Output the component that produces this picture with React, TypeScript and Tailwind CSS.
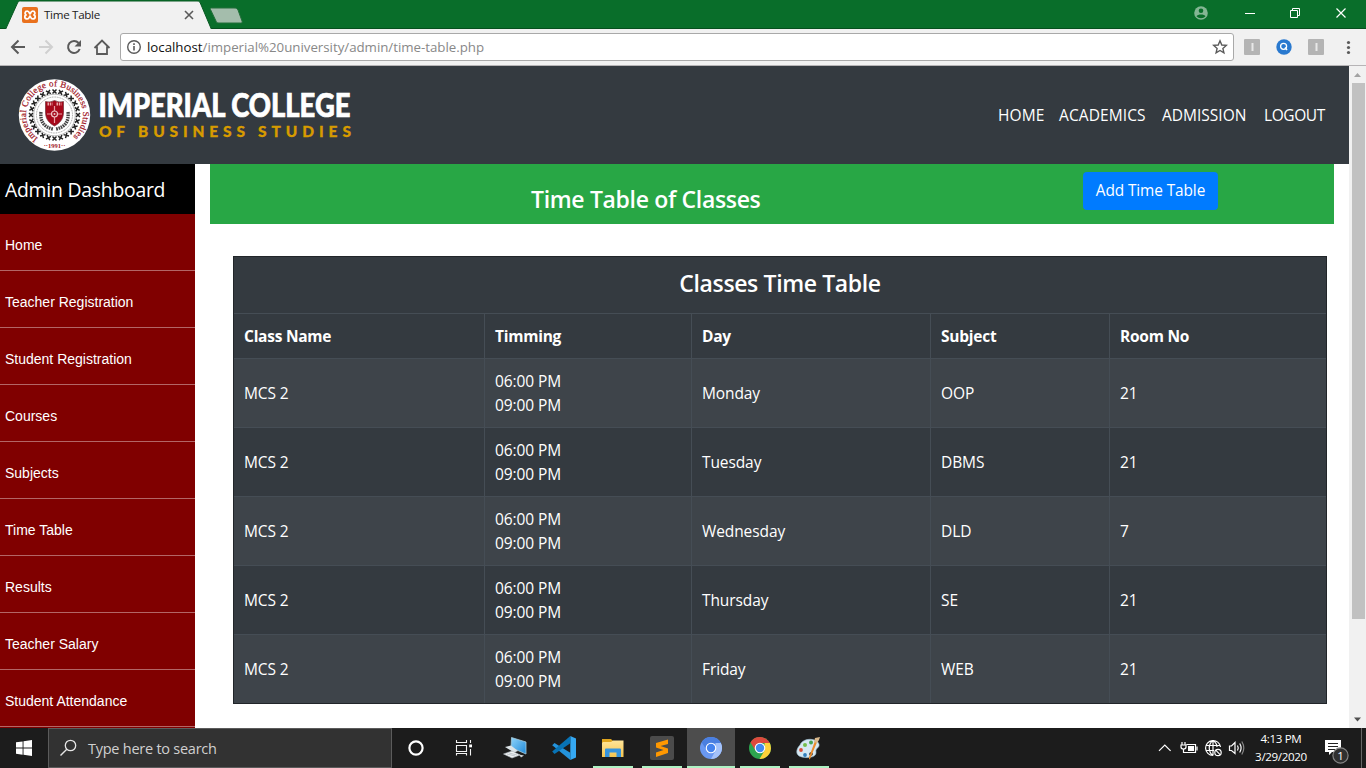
import React from "react";

const ui = "font-['Open_Sans','Noto_Sans',sans-serif]";

const rows = [
  ["Monday", "OOP", "21"],
  ["Tuesday", "DBMS", "21"],
  ["Wednesday", "DLD", "7"],
  ["Thursday", "SE", "21"],
  ["Friday", "WEB", "21"],
];

const menu = [
  "Home",
  "Teacher Registration",
  "Student Registration",
  "Courses",
  "Subjects",
  "Time Table",
  "Results",
  "Teacher Salary",
  "Student Attendance",
];

function TabStrip() {
  return (
    <div className="relative h-[29px] shrink-0 bg-[#096e2a]">
      <svg className="absolute inset-0" width="1366" height="29" viewBox="0 0 1366 29">
        <path d="M0 28.5H1366" stroke="#064f1e" />
        <path d="M5.500 29.500L17.500 3C18.200 1.500 19 1 20.500 1H197C199 1 199.500 1.500 200.300 3L211.500 29.500Z" fill="#f1f1f1" stroke="#075821" />
        <path d="M211.500 8H234C236 8 237 8.500 238 10L242 21C242.500 22.500 242 23 240.500 23H219C217 23 216.500 22.500 216 21L210.500 9.500C210 8.500 210.500 8 211.500 8Z" fill="#a4bdac" stroke="#246f3b" />
        <rect x="22" y="7" width="16" height="16" rx="2" fill="#e9711d" />
        <path d="M27.300 11.200C24.500 11.200 24.400 14.500 26.600 14.900C24 15.300 24.200 18.900 27.300 18.900C29.600 18.900 29.200 16 30 16C30.800 16 30.400 18.900 32.700 18.900C35.800 18.900 36 15.300 33.400 14.900C35.600 14.500 35.500 11.200 32.700 11.200C30.400 11.200 30.800 14 30 14C29.200 14 29.600 11.200 27.300 11.200Z" fill="none" stroke="#fff" strokeWidth="1.700" />
        <path d="M185 11L193 19M193 11L185 19" stroke="#5a5a5a" strokeWidth="1.600" />
        <circle cx="1201" cy="13" r="6.800" fill="#84b694" />
        <circle cx="1201" cy="10.800" r="2.300" fill="#096e2a" />
        <path d="M1196.500 16.200C1197.500 13.800 1204.500 13.800 1205.500 16.200C1203.500 18.800 1198.500 18.800 1196.500 16.200Z" fill="#096e2a" />
        <path d="M1245 13.500H1255M1290.500 10.500H1297.500V17.500H1290.500ZM1292.500 10V8.500H1299.500V15.500H1298" fill="none" stroke="#fff" />
        <path d="M1336.500 8.500L1345.500 17.500M1345.500 8.500L1336.500 17.500" stroke="#fff" strokeWidth="1.200" />
      </svg>
      <span className={`${ui} absolute left-[44px] top-[6px] text-[11.6px] leading-[18px] tracking-[-0.3px] text-[#222]`}>Time Table</span>
    </div>
  );
}

function Toolbar() {
  return (
    <div className="flex h-[37px] shrink-0 items-start border-b border-[#b6b4b6] bg-[#f1f1f1] pt-1">
      <svg width="120" height="29" viewBox="0 33 120 29" fill="none" className="shrink-0">
        <path d="M25 47H12.500M18.500 40.500L12 47L18.500 53.500" stroke="#5a5a5a" strokeWidth="2" />
        <path d="M39 47H51.500M45.500 40.500L52 47L45.500 53.500" stroke="#d0d0d0" strokeWidth="2" />
        <path d="M78.600 43A6 6 0 1 0 79.700 49" stroke="#5a5a5a" strokeWidth="2" />
        <path d="M81 40V46.500H74.500Z" fill="#5a5a5a" />
        <path d="M94.500 48L102 40.500L109.500 48M97 46.500V54H107V46.500" stroke="#5a5a5a" strokeWidth="1.800" />
      </svg>
      <div className="flex h-[28px] w-[1114px] shrink-0 items-center rounded-[3px] border border-[#a9a9a9] bg-white px-[5px]">
        <svg width="16" height="16" viewBox="0 0 16 16">
          <circle cx="8" cy="8" r="6.300" fill="none" stroke="#5a5a5a" strokeWidth="1.400" />
          <path d="M8 7V11.500M8 4.300V5.900" stroke="#5a5a5a" strokeWidth="1.600" />
        </svg>
        <span className={`${ui} ml-[5px] text-[13.3px] leading-[20px] tracking-[-0.02px] text-[#888]`}>
          <span className="text-[#111]">localhost</span>/imperial%20university/admin/time-table.php
        </span>
        <svg className="ml-auto" width="16" height="16" viewBox="0 0 16 16">
          <path d="M8 1.800L9.800 6L14.300 6.400L10.900 9.400L11.900 13.900L8 11.500L4.100 13.900L5.100 9.400L1.700 6.400L6.200 6Z" fill="none" stroke="#5a5a5a" strokeWidth="1.400" />
        </svg>
      </div>
      <svg width="132" height="29" viewBox="1234 33 132 29">
        <rect x="1244" y="39" width="16" height="16" rx="1" fill="#b4b4b4" />
        <path d="M1252.500 43V51" stroke="#e8e8e8" strokeWidth="2" />
        <circle cx="1284" cy="47" r="7.700" fill="#2979cf" />
        <circle cx="1283.600" cy="46.300" r="3" fill="none" stroke="#fff" strokeWidth="1.300" />
        <path d="M1285 47.500L1287 50" stroke="#fff" strokeWidth="1.500" />
        <rect x="1308" y="39" width="16" height="16" rx="1" fill="#b4b4b4" />
        <path d="M1316.500 43V51" stroke="#e8e8e8" strokeWidth="2" />
        <circle cx="1348.500" cy="42.500" r="1.600" fill="#5a5a5a" />
        <circle cx="1348.500" cy="47.500" r="1.600" fill="#5a5a5a" />
        <circle cx="1348.500" cy="52.500" r="1.600" fill="#5a5a5a" />
      </svg>
    </div>
  );
}

function Logo() {
  return (
    <svg width="370" height="98" viewBox="0 66 370 98" className="shrink-0">
      <defs>
        <path id="ringTop" d="M38 138.300A28.550 28.550 0 1 1 73 136.700" />
      </defs>
      <circle cx="54.500" cy="115" r="35.700" fill="#fff" />
      <text fill="#a01525" fontSize="8.900" fontFamily="Liberation Serif, serif" textLength="141" stroke="#a01525" strokeWidth=".2">
        <textPath href="#ringTop">Imperial College of Business Studies</textPath>
      </text>
      <text x="54.500" y="148.300" textAnchor="middle" fill="#a01525" fontSize="6.500" fontFamily="Liberation Serif, serif" fontWeight="bold">··1991··</text>
      {Array.from({ length: 24 }, (_, i) => (
        <path key={i} transform={`rotate(${i * 15} 54.5 115)`} d="M52.500 89.500L56.500 93.500M56.500 89.500L52.500 93.500" stroke="#222" strokeWidth="1.500" />
      ))}
      <circle cx="54.500" cy="115" r="20.800" fill="none" stroke="#999" strokeWidth=".7" />
      <circle cx="54.500" cy="115" r="18" fill="none" stroke="#888" strokeWidth=".8" strokeDasharray="1 .7" />
      <path d="M41 112C40 122 44 127 53 129M68 112C69 122 65 127 56 129" fill="none" stroke="#444" strokeWidth="3.400" strokeDasharray="1.600 .8" />
      <path d="M45.500 101.500Q50 103 54.500 100.500Q59 103 63.500 101.500V112C63.500 120 59 123.500 54.500 126C50 123.500 45.500 120 45.500 112Z" fill="#a6081a" stroke="#703038" strokeWidth=".7" />
      <path d="M54.500 106V123M47 114H62" stroke="#e8a0a5" strokeWidth="1.200" />
      <path d="M47.500 104H52.500M56.500 104H61.500" stroke="#e9a8ab" strokeWidth="3" strokeDasharray="1.500 .8" />
      <circle cx="54.500" cy="114" r="3" fill="#a6081a" stroke="#eec5c7" strokeWidth="1.200" />
      <circle cx="54.500" cy="114" r="1" fill="#eec5c7" />
      <g fontFamily="Lato, sans-serif" fontWeight="900">
        <text x="98.500" y="117" fontSize="32" fill="#fff" stroke="#fff" strokeWidth=".7" textLength="252" lengthAdjust="spacingAndGlyphs">IMPERIAL COLLEGE</text>
        <g fontSize="15.500" fill="#d79b00" stroke="#d79b00" strokeWidth=".3">
          <text x="99" y="137" textLength="26">OF</text>
          <text x="138" y="137" textLength="107">BUSINESS</text>
          <text x="258" y="137" textLength="93">STUDIES</text>
        </g>
      </g>
    </svg>
  );
}

function Page() {
  return (
    <div className={`${ui} flex min-w-0 flex-1 flex-col overflow-hidden bg-white`}>
      <header className="flex h-[98px] shrink-0 items-center justify-between bg-[#343a40] pr-6">
        <Logo />
        <nav className="flex gap-4 whitespace-nowrap text-[15.5px] leading-6 text-white">
          <a className="w-[45px] tracking-[0.1px]">HOME</a>
          <a className="w-[87px] tracking-[0.1px]">ACADEMICS</a>
          <a className="w-[86px]">ADMISSION</a>
          <a className="w-[61px] tracking-[-0.4px]">LOGOUT</a>
        </nav>
      </header>
      <div className="flex min-h-0 flex-1">
        <aside className="w-[195px] shrink-0 overflow-hidden bg-[#800000] text-white">
          <h2 className="h-[50px] bg-black pl-[5px] pt-[11px] text-[19.4px] leading-[30px] tracking-[-0.25px]">Admin Dashboard</h2>
          <ul className="font-['Liberation_Sans',Arial,sans-serif] text-[14px]">
            {menu.map((m) => (
              <li key={m} className="flex h-[57px] items-center border-b border-[#b36666] pl-[5px] pt-[6px]">{m}</li>
            ))}
          </ul>
        </aside>
        <main className="flex-1 px-[15px]">
          <div className="flex h-[60px] bg-[#28a745] text-white">
            <h1 className="w-[873px] pl-[321px] pt-[21px] text-[23px] font-semibold leading-[29px] tracking-[-0.33px]">Time Table of Classes</h1>
            <button className="mt-2 flex h-[38px] w-[135px] items-center justify-center whitespace-nowrap rounded bg-[#007bff] text-[15.4px] tracking-[-0.1px]">Add Time Table</button>
          </div>
          <div className="ml-[23px] mt-8 h-[448px] w-[1094px] border border-[#212529] bg-[#343a40]">
            <table className="w-full table-fixed border-separate border-spacing-0 text-left text-[15.5px] leading-6 tracking-[-0.1px] text-white">
              <colgroup>
                <col className="w-[250px]" />
                <col className="w-[207px]" />
                <col className="w-[239px]" />
                <col className="w-[179px]" />
                <col className="w-[217px]" />
              </colgroup>
              <thead>
                <tr className="h-[56px]">
                  <th colSpan={5} className="p-0 pb-[4px] text-center text-[23px] font-semibold tracking-[-0.37px]">Classes Time Table</th>
                </tr>
                <tr className="h-[45px]">
                  {["Class Name", "Timming", "Day", "Subject", "Room No"].map((h) => (
                    <th key={h} className="border-l border-t border-[#454d55] py-0 pl-[10px] font-bold tracking-[-0.25px] first:border-l-0">{h}</th>
                  ))}
                </tr>
              </thead>
              <tbody>
                {rows.map(([day, subject, room]) => (
                  <tr key={day} className="h-[69px] odd:bg-[#3e444a]">
                    <td className="border-t border-[#454d55] py-0 pl-[10px]">MCS 2</td>
                    <td className="border-l border-t border-[#454d55] py-0 pl-[10px]">06:00 PM<br />09:00 PM</td>
                    <td className="border-l border-t border-[#454d55] py-0 pl-[10px]">{day}</td>
                    <td className="border-l border-t border-[#454d55] py-0 pl-[10px]">{subject}</td>
                    <td className="border-l border-t border-[#454d55] py-0 pl-[10px]">{room}</td>
                  </tr>
                ))}
              </tbody>
            </table>
          </div>
        </main>
      </div>
    </div>
  );
}

function Scrollbar() {
  return (
    <div className="flex w-[17px] shrink-0 flex-col items-center bg-[#f1f1f1]">
      <svg width="17" height="17" viewBox="0 0 17 17"><path d="M5 11L8.500 7L12 11Z" fill="#a3a3a3" /></svg>
      <div className="ml-[2px] h-[536px] w-[13px] bg-[#c1c1c1]" />
      <svg className="mt-auto" width="17" height="17" viewBox="0 0 17 17"><path d="M5 6.500L8.500 10.500L12 6.500Z" fill="#505050" /></svg>
    </div>
  );
}

function Taskbar() {
  return (
    <div className={`${ui} flex h-10 shrink-0 bg-[#1c1c1c]`}>
      <svg width="48" height="40" viewBox="0 728 48 40" className="shrink-0">
        <path d="M16 742.300L22.600 741.400V747.400H16ZM23.500 741.200L32 740V747.400H23.500ZM16 748.500H22.600V754.700L16 753.700ZM23.500 748.500H32V756L23.500 754.800Z" fill="#fff" />
      </svg>
      <div className="flex w-[344px] shrink-0 items-center border border-[#5b5b5b] bg-[#323232]">
        <svg width="39" height="38" viewBox="49 729 39 38" fill="none">
          <circle cx="70.500" cy="745.500" r="5.200" stroke="#e6e6e6" strokeWidth="1.300" />
          <path d="M66.800 749.200L60.500 755.500" stroke="#e6e6e6" strokeWidth="1.400" />
        </svg>
        <span className="mt-px text-[14.5px] leading-5 tracking-[-0.25px] text-[#d0d0d0]">Type here to search</span>
      </div>
      <svg width="758" height="40" viewBox="392 728 758 40" className="shrink-0">
        <defs>
          <linearGradient id="pcScreen" x2="1" y2="1"><stop stopColor="#8fd4fa" /><stop offset="1" stopColor="#2089d8" /></linearGradient>
          <linearGradient id="folderFace" x2="0" y2="1"><stop stopColor="#ffe59a" /><stop offset="1" stopColor="#f5c44f" /></linearGradient>
        </defs>
        <circle cx="416" cy="748" r="6.600" fill="none" stroke="#fff" strokeWidth="2.200" />
        <path d="M456.500 740V742.500H466.500V740M456.500 745.500H466.500V751.500H456.500ZM456.500 755.500V753.500H466.500V755.500M470.500 740V743M470.500 749V755.500" fill="none" stroke="#f2f2f2" strokeWidth="1.100" />
        <rect x="469.200" y="744.500" width="2.800" height="2.800" fill="#fff" />
        <path d="M511.500 737.500L526 742V754L511 747.500Z" fill="url(#pcScreen)" stroke="#a7cbdc" strokeWidth=".8" />
        <path d="M505 747L511 745.500L518 751L514 752.500Z" fill="#dce4e8" />
        <path d="M503.500 754L512 751L520 755L512 758Z" fill="#f1f3f4" stroke="#b2bbc1" strokeWidth=".6" />
        <path d="M507 754L515 756M509 753L517 755" stroke="#9faab2" strokeWidth=".6" />
        <path d="M519 754.500L524 755.500L521 757.500Z" fill="#cbd2d6" />
        <path d="M570.300 736L576 738.500V757.500L570.300 760Z" fill="#35a8f2" />
        <path d="M554.500 743L552.200 745.200L570.300 760V752.800Z" fill="#2493dc" />
        <path d="M552.200 751.500L570.300 736V743.200L554.500 754Z" fill="#0873b5" />
        <path d="M602 739H611L613 741H623V757H602Z" fill="#e0a51e" />
        <path d="M603 742H611L613 740.500H623.500V757H602V743Z" fill="url(#folderFace)" />
        <path d="M606 748.500H620Q621 748.500 621 749.500V757H616.500V752.500H609.500V757H605V749.500Q605 748.500 606 748.500Z" fill="#3694de" />
        <rect x="650" y="736" width="24" height="24" rx="2" fill="#4b4b4b" />
        <path d="M656 743L668 739.500V744L660.500 746L668 748.500V753L656 757V752.500L663.500 750L656 747.500Z" fill="#ff9800" />
        <rect x="687" y="728" width="48" height="40" fill="#4d4d4d" />
        <g transform="translate(711 748)">
          <circle r="11" fill="#6998f2" />
          <path d="M0-11A11 11 0 0 1 10-4.700H0L-4.100 2.400L-9.400-5.700A11 11 0 0 1 0-11Z" fill="#4a7fe0" />
          <path d="M9.900-4.900A11 11 0 0 1 0 11L4.600 2.500V-4.900Z" fill="#a4c2fa" />
          <circle r="5.300" fill="#fff" /><circle r="4.200" fill="#4583ee" />
        </g>
        <g transform="translate(760 748)">
          <circle r="11" fill="#2da44f" />
          <path d="M-9.500-5.600A11 11 0 0 1 9.800-4.900H0L-4.500 2.500Z" fill="#de493d" />
          <path d="M9.800-4.900A11 11 0 0 1-.5 11L4.600 2.500V-4.900Z" fill="#fdd13a" />
          <circle r="5.300" fill="#fff" /><circle r="4.200" fill="#438af0" />
        </g>
        <path d="M800 745C803 737 817 738 819 744C820 748 815 748 816 752C817 758 805 759 799 756C795 753 797 748 800 745Z" fill="#d6e8f2" stroke="#94b6c8" strokeWidth=".6" />
        <circle cx="805" cy="745" r="2" fill="#74bd4b" /><circle cx="811" cy="742.500" r="2" fill="#46a354" /><circle cx="801" cy="750" r="1.900" fill="#d84d35" /><circle cx="805" cy="755" r="1.900" fill="#327fba" /><circle cx="811" cy="754" r="1.800" fill="#1c1c1c" />
        <path d="M817.500 741L810 759L809 759.500V757L815 741Z" fill="#eb8c2c" />
        <path d="M814 742L815 738L820 737L819 740L817 743Z" fill="#d9b98c" />
        <path d="M593 767H633M642 767H682M687 767H735M740 767H780M789 767H829" stroke="#aef2c3" strokeWidth="2" />
      </svg>
      <svg width="101" height="40" viewBox="1150 728 101 40" fill="none" className="shrink-0" stroke="#fff" strokeWidth="1.200">
        <path d="M1159 750.800L1164.800 745L1170.600 750.800" />
        <path d="M1186.500 744.500H1195.500V752.500H1185.500M1197 746.500V750.500M1182 742V744.500M1185 742V744.500M1181 745H1186V747Q1186 749 1183.500 749Q1181 749 1181 747ZM1183.500 749V752.500H1186" />
        <path d="M1188 746H1194V751H1188Z" fill="#fff" stroke="none" />
        <path d="M1213 755.500A7.500 7.500 0 1 1 1220.500 747M1213 740.500V755.500M1213 740.500C1208 744 1208 752 1213 755.500M1213 740.500C1216 742.500 1217 745 1217 747M1206 745.500H1220M1206 750.500H1214" />
        <circle cx="1218" cy="752.500" r="3.200" /><path d="M1215.700 750.200L1220.300 754.800" />
        <path d="M1229.500 746H1231.500L1235 742.500V753.500L1231.500 750.500H1229.500ZM1237.500 745.500Q1239 748 1237.500 750.500M1239.700 743.500Q1242.500 748 1239.700 752.500" />
        <path d="M1241.800 741.500Q1245.800 748 1241.800 754.500" stroke="#888" />
      </svg>
      <div className="flex w-[60px] shrink-0 flex-col items-center pt-[2px] text-[11.6px] leading-[18px] tracking-[-0.35px] text-white">
        <span>4:13 PM</span>
        <span>3/29/2020</span>
      </div>
      <svg width="55" height="40" viewBox="1311 728 55 40" className="shrink-0">
        <path d="M1325 740H1341V752H1332L1329 755V752H1325Z" fill="#fff" />
        <path d="M1328 743.500H1338M1328 746.500H1338M1328 749.500H1335" stroke="#222" />
        <circle cx="1340.500" cy="755.500" r="7.600" fill="#303030" stroke="#858585" strokeWidth="1.200" />
        <text x="1340.500" y="759.500" textAnchor="middle" fontFamily="Open Sans, sans-serif" fontSize="11.500" fill="#fff">1</text>
        <path d="M1361.500 728V768" stroke="#666" />
      </svg>
    </div>
  );
}

export default function App() {
  return (
    <div className="flex h-[768px] w-[1366px] flex-col overflow-hidden">
      <TabStrip />
      <Toolbar />
      <div className="flex min-h-0 flex-1">
        <Page />
        <Scrollbar />
      </div>
      <Taskbar />
    </div>
  );
}
